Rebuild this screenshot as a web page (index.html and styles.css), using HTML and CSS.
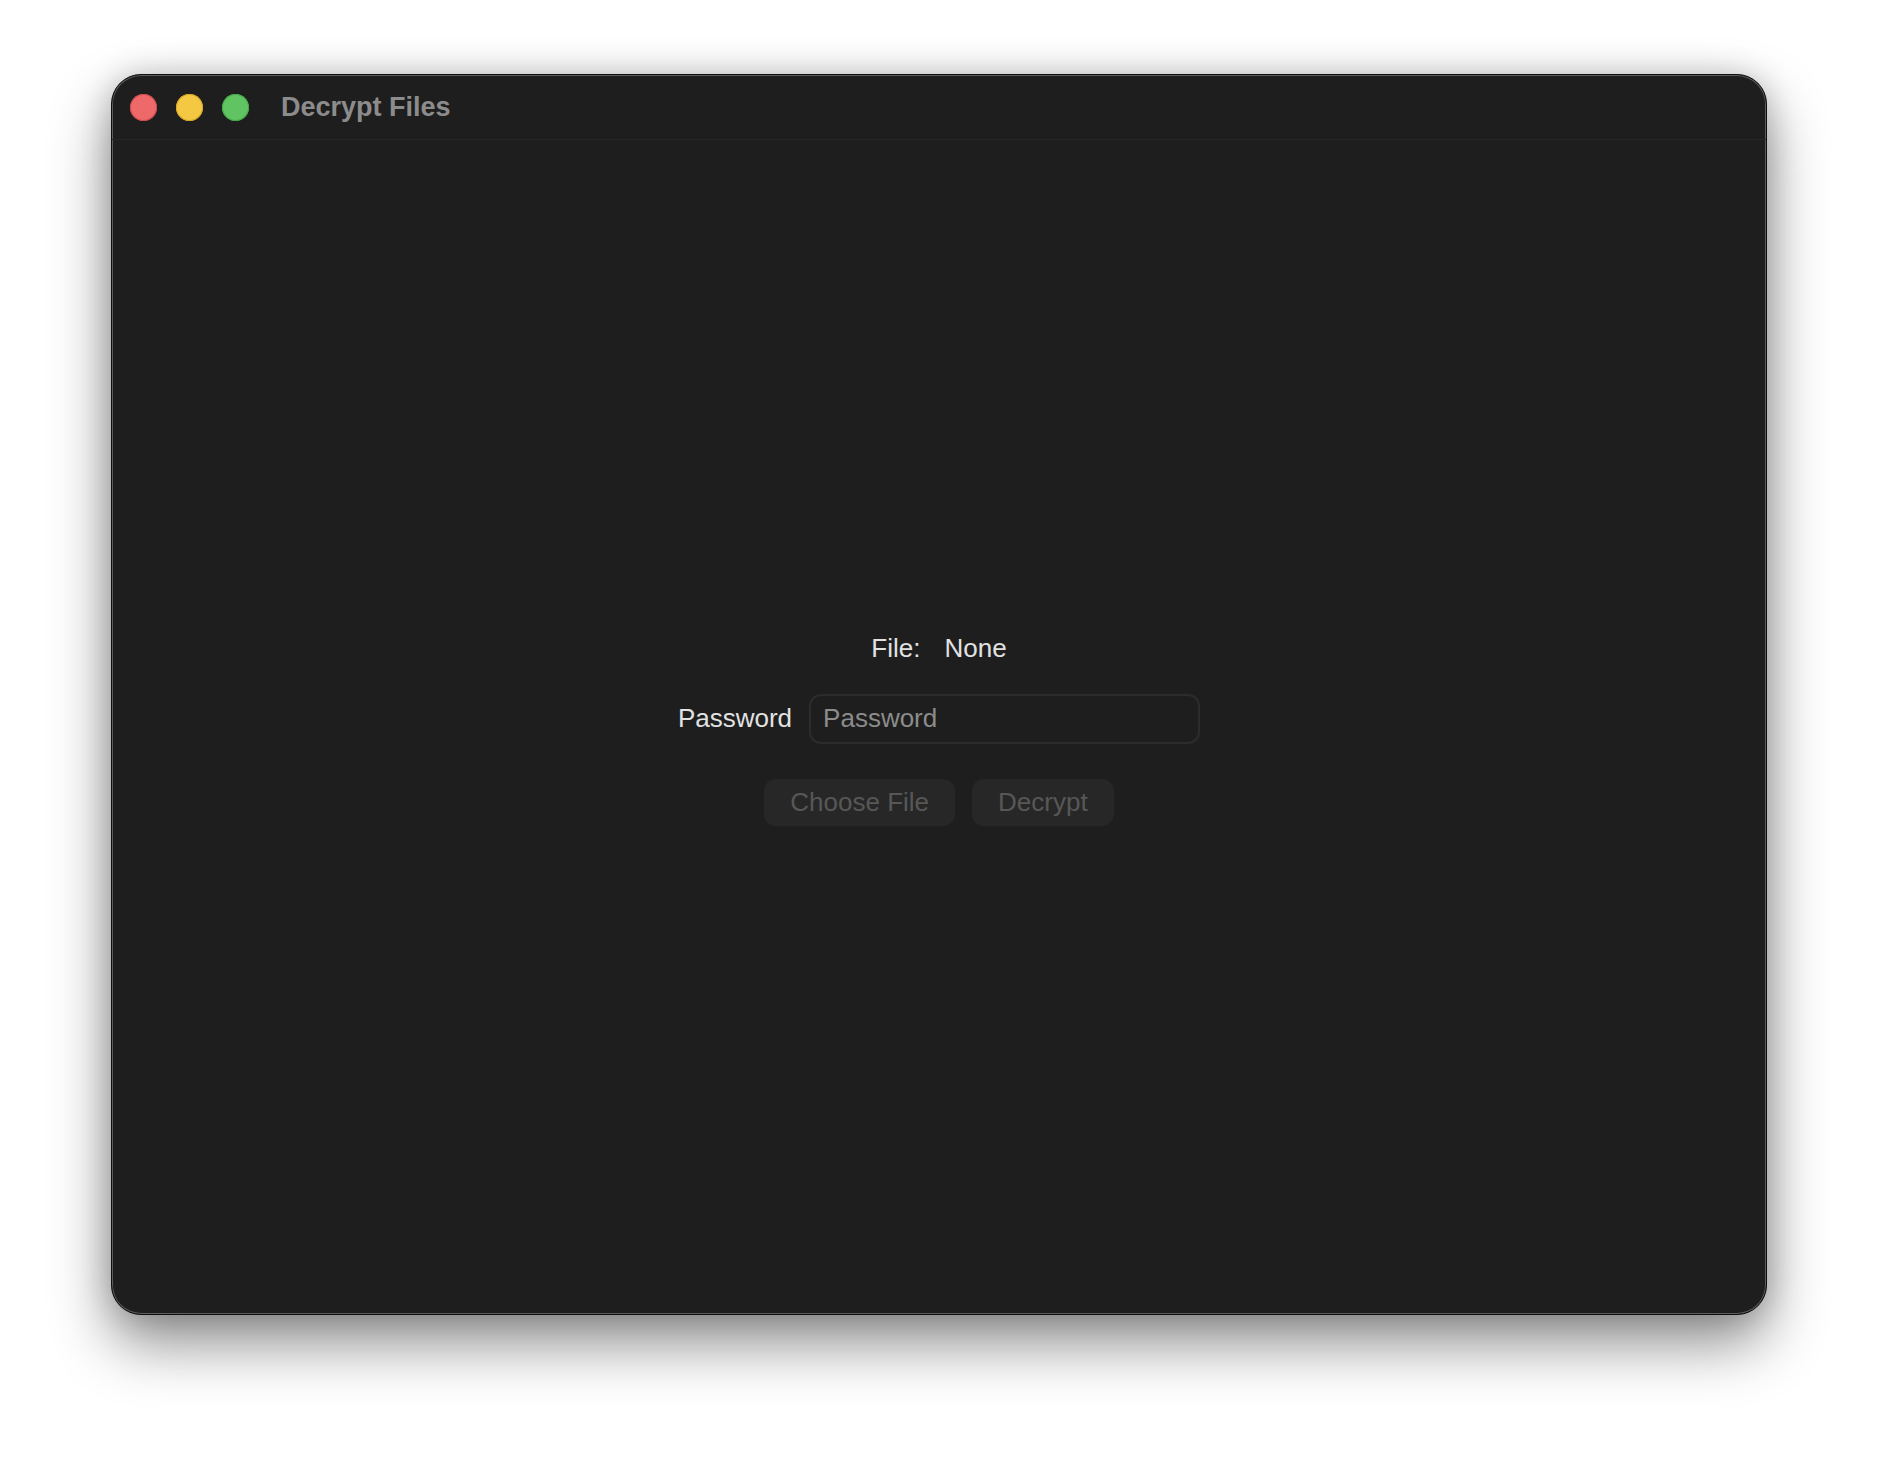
FILE: index.html
```html
<!DOCTYPE html>
<html lang="en">

<head>
    <meta charset="UTF-8">
    <meta name="viewport" content="width=device-width, initial-scale=1.0">
    <title>Decrypt Files</title>
    <link rel="stylesheet" href="styles.css">
</head>

<body>

    <main class="window">

        <header class="titlebar">
            <div class="lights">
                <span class="light close"></span>
                <span class="light minimize"></span>
                <span class="light zoom"></span>
            </div>
            <h1 class="title">Decrypt Files</h1>
        </header>

        <section class="content">

            <div class="file-row">
                <span class="label">File:</span>
                <span class="value">None</span>
            </div>

            <div class="password-row">
                <label class="label" for="password">Password</label>
                <input class="field" id="password" type="password" placeholder="Password">
            </div>

            <div class="actions">
                <button class="btn" disabled>Choose File</button>
                <button class="btn" disabled>Decrypt</button>
            </div>

        </section>

    </main>

</body>

</html>
```

FILE: styles.css
```css
/*      Variables       */
:root {
    --window-bg: #1e1e1e;
    --line: #262626;
    --text: #e2e2e2;
    --text-muted: #8c8c8c;
    --text-disabled: #575757;
    --button-bg: #272727;
}

/*      Reset Styles    */
html {
    box-sizing: border-box;
    font-family: "Liberation Sans", Arial, sans-serif;
}

*,
*::before,
*::after {
    box-sizing: inherit;
}

body {
    margin: 0;
    padding: 74px 0 0 111px;
    background-color: #fff;
    min-height: 100vh;
}

/*      Window          */
.window {
    width: 1656px;
    height: 1241px;
    background-color: var(--window-bg);
    border: 1px solid #0e0e0e;
    border-radius: 30px;
    box-shadow:
        inset 0 0 0 1px #5c5c5c,
        0 28px 60px rgba(0, 0, 0, .45),
        0 0 30px rgba(0, 0, 0, .18);

    display: flex;
    flex-direction: column;
    overflow: hidden;
}

.titlebar {
    height: 65px;
    flex-shrink: 0;
    border-bottom: 1px solid var(--line);
    padding-left: 18px;

    display: flex;
    align-items: center;
}

.lights {
    display: flex;
    gap: 19px;
}

.light {
    width: 27px;
    height: 27px;
    border-radius: 50%;
}

.close {
    background-color: #ee6a6a;
    box-shadow: inset 0 0 0 1px #d04a4c;
}

.minimize {
    background-color: #f4c842;
    box-shadow: inset 0 0 0 1px #d7a826;
}

.zoom {
    background-color: #61c463;
    box-shadow: inset 0 0 0 1px #44a846;
}

.title {
    margin: 0 0 0 32px;
    font-size: 27px;
    font-weight: bold;
    color: var(--text-muted);
}

/*      Form            */
.content {
    flex: 1;

    display: flex;
    flex-direction: column;
    justify-content: center;
    align-items: center;
    padding-top: 3px;
}

.label,
.value {
    font-size: 26px;
    color: var(--text);
}

.file-row {
    display: flex;
    gap: 24px;
    line-height: 32px;
    margin-bottom: 30px;
}

.password-row {
    display: flex;
    align-items: center;
    gap: 17px;
    margin-bottom: 35px;
}

.field {
    width: 391px;
    height: 50px;
    padding: 0 12px;
    font-family: inherit;
    font-size: 26px;
    color: var(--text);
    background-color: var(--window-bg);
    border: 2px solid #2c2c2c;
    border-radius: 12px;
    outline: none;

    &::placeholder {
        color: var(--text-muted);
    }
}

.actions {
    display: flex;
    gap: 17px;
}

.btn {
    height: 47px;
    padding: 0 26px;
    font-family: inherit;
    font-size: 26px;
    color: var(--text-disabled);
    background-color: var(--button-bg);
    border: none;
    border-radius: 12px;
}
```
